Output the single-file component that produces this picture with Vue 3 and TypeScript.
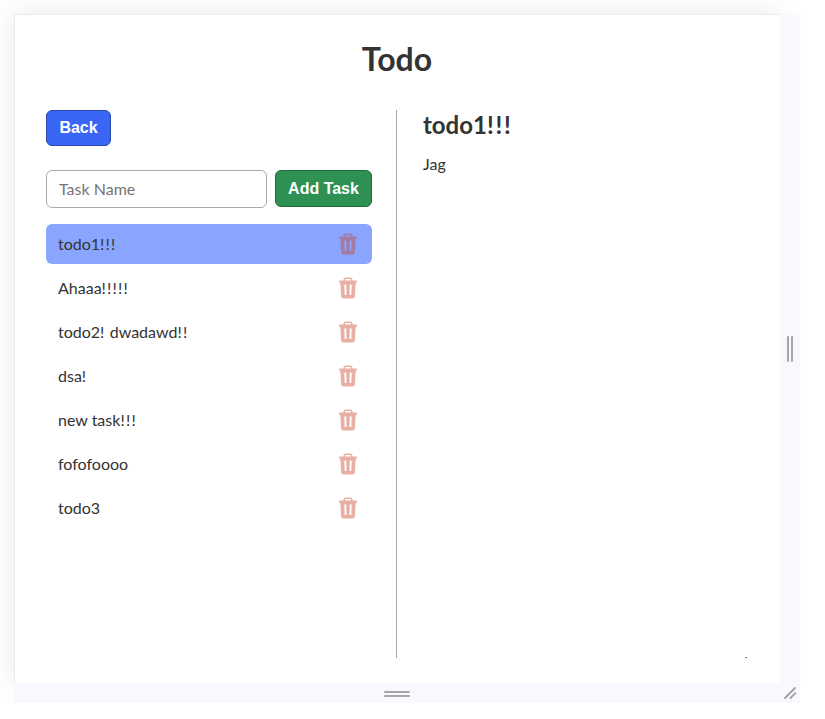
<script setup lang="ts">
import { ref } from 'vue'

interface Task {
  id: number
  name: string
  detail: string
}

const tasks = ref<Task[]>([
  { id: 1, name: 'todo1!!!', detail: 'Jag' },
  { id: 2, name: 'Ahaaa!!!!!', detail: '' },
  { id: 3, name: 'todo2! dwadawd!!', detail: '' },
  { id: 4, name: 'dsa!', detail: '' },
  { id: 5, name: 'new task!!!', detail: '' },
  { id: 6, name: 'fofofoooo', detail: '' },
  { id: 7, name: 'todo3', detail: '' },
])
const selected = ref<Task | undefined>(tasks.value[0])
const newName = ref('')
let nextId = 8

// Splits a name into runs so that exclamation marks can be spaced apart.
function runs(name = ''): string[] {
  return name.split(/(!+)/).filter(Boolean)
}

function addTask(): void {
  const name = newName.value.trim()
  if (!name) return
  tasks.value.push({ id: nextId++, name, detail: '' })
  newName.value = ''
}

function removeTask(id: number): void {
  tasks.value = tasks.value.filter((t) => t.id !== id)
  if (selected.value?.id === id) selected.value = tasks.value[0]
}
</script>

<template>
  <div class="viewport">
    <main class="page">
      <h1>Todo</h1>
      <div class="columns">
        <section class="left">
          <button class="btn back" type="button">Back</button>
          <form class="add" @submit.prevent="addTask">
            <input v-model="newName" placeholder="Task Name" />
            <button class="btn green" type="submit">Add Task</button>
          </form>
          <ul class="list">
            <li
              v-for="task in tasks"
              :key="task.id"
              :class="{ active: task.id === selected?.id }"
              @click="selected = task"
            >
              <span class="name"><span v-for="(run, i) in runs(task.name)" :key="i" :class="{ bang: run[0] === '!' }">{{ run }}</span></span>
              <svg class="trash" viewBox="0 0 18 22" @click.stop="removeTask(task.id)">
                <path
                  fill-rule="evenodd"
                  d="M4.500 3.600V2.800A2.300 2.300 0 0 1 6.800.5H11.200A2.300 2.300 0 0 1 13.500 2.800V3.600H17.200A.8.8 0 0 1 18 4.400V4.900A.8.8 0 0 1 17.200 5.700H16.700L15.900 19.200A2.500 2.500 0 0 1 13.400 21.500H4.600A2.500 2.500 0 0 1 2.100 19.200L1.300 5.700H.8A.8.8 0 0 1 0 4.900V4.400A.8.8 0 0 1 .8 3.600ZM6 3.600H12V2.900A1 1 0 0 0 11 1.900H7A1 1 0 0 0 6 2.900ZM5.300 7.600L5.700 18H7.500L7.200 7.600ZM10.800 7.600L10.500 18H12.300L12.700 7.600Z"
                />
              </svg>
            </li>
          </ul>
        </section>
        <section class="detail">
          <h2><span v-for="(run, i) in runs(selected?.name)" :key="i" :class="{ bang: run[0] === '!' }">{{ run }}</span></h2>
          <p>{{ selected?.detail }}</p>
          <span class="dot"></span>
        </section>
      </div>
    </main>
    <div class="handle side"><i></i><i></i></div>
    <div class="handle bottom"><i></i><i></i></div>
    <div class="handle corner">
      <svg viewBox="0 0 20 20">
        <path d="M5 15 15 5M10.500 15 15.300 10.200" />
      </svg>
    </div>
  </div>
</template>

<style>
body {
  background: #fff;
}
</style>

<style scoped>
* {
  box-sizing: border-box;
}
.viewport {
  display: grid;
  grid-template-columns: 766px 20px;
  grid-template-rows: 669px 20px;
  width: 800px;
  padding: 14px 0 0 14px;
  font-family: Lato, sans-serif;
  font-size: 16px;
  color: #333;
}
.page {
  display: flex;
  flex-direction: column;
  padding: 24px 32px 25px 31px;
  border: solid #ebebeb;
  border-width: 1px 0 0 1px;
  background: #fff;
  box-shadow: 0 0 30px rgba(0, 0, 0, 0.09);
}
h1 {
  margin: 0 0 31px;
  text-align: center;
  font-size: 32px;
  line-height: 40px;
  font-weight: 700;
}
.columns {
  display: flex;
  flex: 1;
}
.left {
  width: 351px;
  padding-right: 24px;
  border-right: 1px solid #aaa;
}
.btn {
  height: 37px;
  padding: 0 12px;
  border: 1px solid;
  border-radius: 6px;
  font: 700 16px "Liberation Sans", sans-serif;
  color: #fff;
  white-space: nowrap;
}
.back {
  display: block;
  width: 65px;
  height: 36px;
  border-color: #2848ac;
  background: #3a66f6;
}
.green {
  width: 97px;
  border-color: #206b3a;
  background: #2e9153;
}
.add {
  display: flex;
  gap: 8px;
  margin-top: 24px;
}
.add input {
  flex: 1;
  min-width: 0;
  height: 38px;
  padding: 0 12px 2px;
  border: 1px solid #aaa;
  border-radius: 6px;
  background: #fff;
  font: 16px Lato, sans-serif;
  color: #333;
}
.add input::placeholder {
  color: #757575;
}
.list {
  display: grid;
  gap: 4px;
  margin: 16px 0 0;
  padding: 0;
  list-style: none;
}
.list li {
  display: flex;
  align-items: center;
  justify-content: space-between;
  height: 40px;
  padding: 0 15px 0 12px;
  border-radius: 6px;
}
.list li.active {
  background: #8aa5ff;
}
.name {
  padding-bottom: 2px;
}
.bang {
  letter-spacing: 0.075em;
}
.trash {
  width: 18px;
  height: 22px;
  fill: #c83c1e;
  opacity: 0.4;
}
.detail {
  position: relative;
  flex: 1;
  padding-left: 26px;
}
h2 {
  margin: 0;
  font-size: 24px;
  line-height: 30px;
  font-weight: 700;
}
p {
  margin: 14px 0 0;
  line-height: 20px;
}
.dot {
  position: absolute;
  right: 1px;
  bottom: 0;
  width: 2px;
  height: 1px;
  background: #777;
}
.handle {
  z-index: 1;
  display: flex;
  align-items: center;
  justify-content: center;
  gap: 2px;
  background: #f7f9fe;
}
.handle i {
  border-radius: 1px;
  background: #a6a6a6;
}
.side {
  margin-top: 1px;
}
.side i {
  width: 2px;
  height: 26px;
}
.bottom {
  flex-direction: column;
  padding-top: 1px;
}
.bottom i {
  width: 26px;
  height: 2px;
}
.corner svg {
  width: 20px;
  height: 20px;
  fill: none;
  stroke: #a0a0a0;
  stroke-width: 1.8;
  stroke-linecap: round;
}
</style>
